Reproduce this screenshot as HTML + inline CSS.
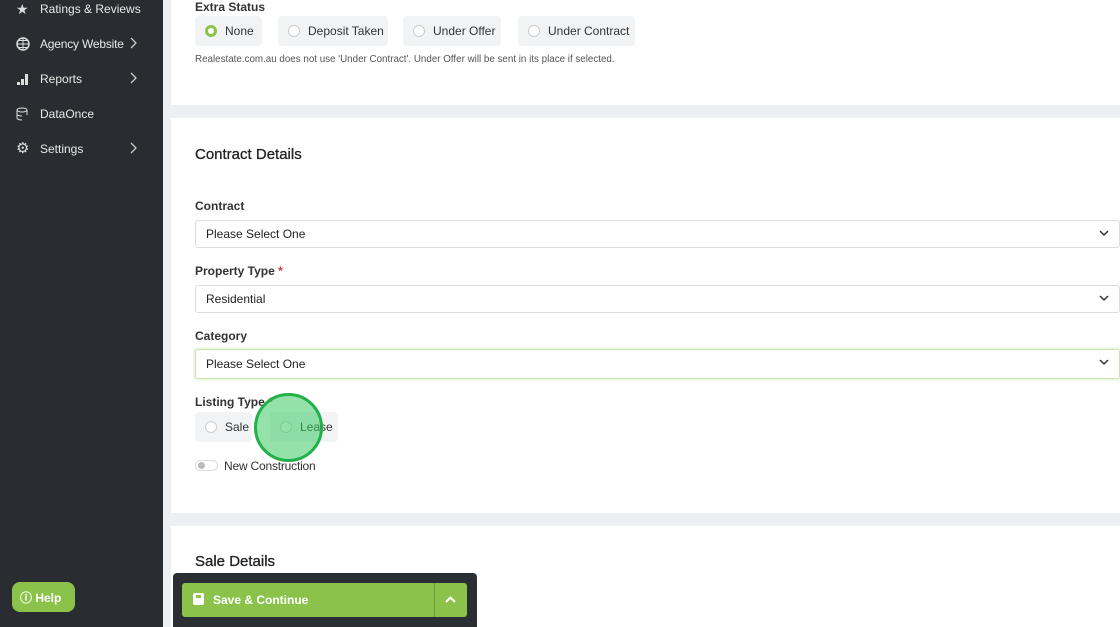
<!DOCTYPE html>
<html><head><style>
*{box-sizing:border-box;margin:0;padding:0}
body{width:1120px;height:627px;overflow:hidden;font-family:"Liberation Sans",sans-serif;background:#edeff2;position:relative;color:#222}
.sb{position:absolute;left:0;top:0;width:163px;height:627px;background:#292d32}
.ni{position:absolute;left:16px;color:#e8e8e8;font-size:12px;display:flex;align-items:center;width:140px}
.ni .ic{width:14px;height:14px;margin-right:10px;display:inline-block}
.ni .ch{position:absolute;left:114px;top:0}
.card{position:absolute;left:171px;width:949px;background:#fff}
.lbl{position:absolute;left:195px;font-size:12px;font-weight:bold;color:#333}
.pill{position:absolute;height:30px;background:#f2f3f5;border-radius:4px;font-size:12px;color:#333;display:flex;align-items:center;padding-left:10px}
.rd{width:12px;height:12px;border-radius:50%;border:1px solid #ccc;background:#fff;margin-right:8px}
.sel{position:absolute;left:195px;width:925px;height:28px;border:1px solid #ddd;border-radius:3px;font-size:12px;padding-left:10px;display:flex;align-items:center;color:#222}
.sel svg{position:absolute;right:10px;top:9px}
h2{position:absolute;left:195px;font-size:15px;font-weight:normal;color:#222;-webkit-text-stroke:0.3px #222}
</style></head><body>
<div class="sb">
<div class="ni" style="top:2px"><span class="ic" style="color:#ddd;font-size:14px;line-height:14px">★</span>Ratings &amp; Reviews</div>
<div class="ni" style="top:37px;letter-spacing:-0.2px"><svg class="ic" viewBox="0 0 14 14"><circle cx="7" cy="7" r="6" fill="none" stroke="#ddd" stroke-width="1.5"/><path d="M1 7h12M7 1v12M3 3.5h8M3 10.5h8" stroke="#ddd"/></svg>Agency Website<svg class="ch" width="7" height="12" viewBox="0 0 7 12"><path d="M1 1l5 5-5 5" stroke="#ccc" stroke-width="1.3" fill="none"/></svg></div>
<div class="ni" style="top:72px"><svg class="ic" viewBox="0 0 14 14"><rect x="1" y="10" width="3" height="3" fill="#ddd"/><rect x="5" y="7" width="3" height="6" fill="#ddd"/><rect x="9" y="2" width="3" height="11" fill="#ddd"/></svg>Reports<svg class="ch" width="7" height="12" viewBox="0 0 7 12"><path d="M1 1l5 5-5 5" stroke="#ccc" stroke-width="1.3" fill="none"/></svg></div>
<div class="ni" style="top:107px"><svg class="ic" viewBox="0 0 14 14"><ellipse cx="6" cy="3" rx="5" ry="2" fill="none" stroke="#ddd"/><path d="M1 3v8c0 1 2 2 5 2M11 3v5M1 7c0 1 2 2 5 2" fill="none" stroke="#ddd"/></svg>DataOnce</div>
<div class="ni" style="top:142px"><span class="ic" style="color:#ddd;font-size:15px;line-height:14px">⚙</span>Settings<svg class="ch" width="7" height="12" viewBox="0 0 7 12"><path d="M1 1l5 5-5 5" stroke="#ccc" stroke-width="1.3" fill="none"/></svg></div>
<div style="position:absolute;left:12px;top:582px;width:63px;height:30px;background:#8bc34a;border-radius:8px;color:#fff;font-size:12px;font-weight:bold;display:flex;align-items:center;padding-left:8px">ⓘ&nbsp;Help</div>
</div>
<div class="card" style="top:0;height:105px"></div>
<div class="lbl" style="top:0">Extra Status</div>
<div class="pill" style="left:195px;top:16px;width:67px"><span class="rd" style="border:3px solid #8bc34a"></span>None</div>
<div class="pill" style="left:278px;top:16px;width:110px"><span class="rd"></span>Deposit Taken</div>
<div class="pill" style="left:403px;top:16px;width:98px"><span class="rd"></span>Under Offer</div>
<div class="pill" style="left:518px;top:16px;width:117px"><span class="rd"></span>Under Contract</div>
<div style="position:absolute;left:195px;top:54px;font-size:9.8px;color:#555">Realestate.com.au does not use 'Under Contract'. Under Offer will be sent in its place if selected.</div>
<div class="card" style="top:118px;height:395px"></div>
<h2 style="top:146px">Contract Details</h2>
<div class="lbl" style="top:199px">Contract</div>
<div class="sel" style="top:220px">Please Select One<svg width="10" height="7" viewBox="0 0 10 7"><path d="M1 1l4 4 4-4" stroke="#333" stroke-width="1.5" fill="none"/></svg></div>
<div class="lbl" style="top:264px">Property Type <span style="color:#d33">*</span></div>
<div class="sel" style="top:285px">Residential<svg width="10" height="7" viewBox="0 0 10 7"><path d="M1 1l4 4 4-4" stroke="#333" stroke-width="1.5" fill="none"/></svg></div>
<div class="lbl" style="top:329px">Category</div>
<div class="sel" style="top:349px;height:30px;border-color:#c9e3b0;box-shadow:0 0 0 2px #eef6e4">Please Select One<svg width="10" height="7" viewBox="0 0 10 7"><path d="M1 1l4 4 4-4" stroke="#333" stroke-width="1.5" fill="none"/></svg></div>
<div class="lbl" style="top:395px">Listing Type <span style="color:#d33">*</span></div>
<div class="pill" style="left:195px;top:412px;width:57px"><span class="rd"></span>Sale</div>
<div class="pill" style="left:270px;top:412px;width:68px"><span class="rd"></span>Lease</div>
<div style="position:absolute;left:254px;top:393px;width:69px;height:69px;border-radius:50%;background:rgba(60,200,100,.55);border:3px solid #22b04a"></div>
<div style="position:absolute;left:195px;top:460px;width:23px;height:11px;border:1px solid #ddd;border-radius:6px"><div style="width:7px;height:7px;border-radius:50%;background:#bbb;margin:1px 2px"></div></div>
<div style="position:absolute;left:224px;top:459px;font-size:12px;color:#333;letter-spacing:-0.2px">New Construction</div>
<div class="card" style="top:526px;height:101px"></div>
<h2 style="top:553px">Sale Details</h2>
<div style="position:absolute;left:173px;top:573px;width:304px;height:54px;background:#2b2f34;border-radius:4px 4px 0 0"></div>
<div style="position:absolute;left:182px;top:583px;width:285px;height:34px;background:#8bc34a;border-radius:3px"></div>
<div style="position:absolute;left:434px;top:583px;width:1px;height:34px;background:#6e9a38"></div>
<div style="position:absolute;left:193px;top:593px;width:11px;height:12px;background:#fff;border-radius:2px"><div style="width:5px;height:3px;background:#8bc34a;margin:2px 3px"></div></div>
<div style="position:absolute;left:213px;top:593px;font-size:12px;font-weight:bold;color:#fff">Save &amp; Continue</div>
<svg style="position:absolute;left:445px;top:596px" width="11" height="7" viewBox="0 0 11 7"><path d="M1 6l4.5-4.5L10 6" stroke="#fff" stroke-width="2" fill="none"/></svg>
</body></html>
